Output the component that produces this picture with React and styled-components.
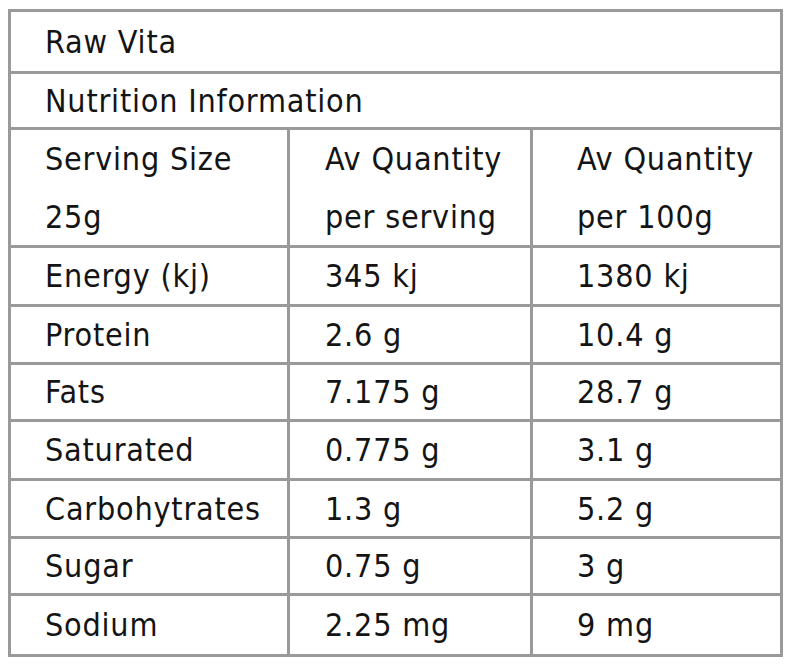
import React from 'react';
import styled, { createGlobalStyle } from 'styled-components';

const GlobalStyle = createGlobalStyle`
  html, body {
    margin: 0;
    padding: 0;
    background: #ffffff;
  }
  body {
    font-family: "DejaVu Sans Condensed", "DejaVu Sans", sans-serif;
    color: #141414;
  }
`;

const Page = styled.div`
  padding: 9px 0 0 8px;
`;

const Table = styled.div`
  display: grid;
  width: 775px;
  box-sizing: border-box;
  grid-template-columns: 279px 243px 250px;
  grid-template-rows: 62px 56px 118px 59px 58px 57px 59px 58px 57px 61px;
  border-top: 3px solid #9a9a9a;
  border-left: 3px solid #9a9a9a;
`;

const Cell = styled.div`
  box-sizing: border-box;
  grid-column: ${props => props.$span ? `span ${props.$span}` : 'auto'};
  border-right: 3px solid #9a9a9a;
  border-bottom: 3px solid #9a9a9a;
  padding-left: ${props => props.$pad || 34}px;
  display: flex;
  flex-direction: column;
  justify-content: center;
  font-size: 32px;
  letter-spacing: 0.8px;
  line-height: 58px;
  white-space: nowrap;
`;

const rows = [
  ['Energy (kj)', '345 kj', '1380 kj'],
  ['Protein', '2.6 g', '10.4 g'],
  ['Fats', '7.175 g', '28.7 g'],
  ['Saturated', '0.775 g', '3.1 g'],
  ['Carbohytrates', '1.3 g', '5.2 g'],
  ['Sugar', '0.75 g', '3 g'],
  ['Sodium', '2.25 mg', '9 mg'],
];

function App() {
  return (
    <Page>
      <GlobalStyle />
      <Table>
        <Cell $span={3}>Raw Vita</Cell>
        <Cell $span={3}>Nutrition Information</Cell>

        <Cell>
          <span>Serving Size</span>
          <span>25g</span>
        </Cell>
        <Cell $pad={35}>
          <span>Av Quantity</span>
          <span>per serving</span>
        </Cell>
        <Cell $pad={44}>
          <span>Av Quantity</span>
          <span>per 100g</span>
        </Cell>

        {rows.map((row, index) => (
          <React.Fragment key={index}>
            <Cell>{row[0]}</Cell>
            <Cell $pad={35}>{row[1]}</Cell>
            <Cell $pad={44}>{row[2]}</Cell>
          </React.Fragment>
        ))}
      </Table>
    </Page>
  );
}

export default App;
